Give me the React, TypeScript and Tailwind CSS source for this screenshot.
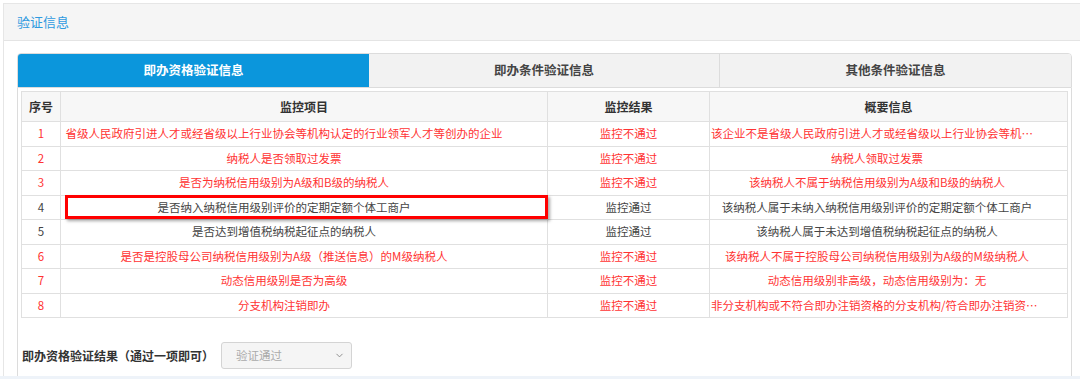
import React from "react";
import { ChevronDown } from "lucide-react";

type Row = { no: number; item: string; result: string; info: string; fail: boolean };

const rows: Row[] = [
  { no: 1, item: "省级人民政府引进人才或经省级以上行业协会等机构认定的行业领军人才等创办的企业", result: "监控不通过", info: "该企业不是省级人民政府引进人才或经省级以上行业协会等机构认定的行业领军人才等创办的企业", fail: true },
  { no: 2, item: "纳税人是否领取过发票", result: "监控不通过", info: "纳税人领取过发票", fail: true },
  { no: 3, item: "是否为纳税信用级别为A级和B级的纳税人", result: "监控不通过", info: "该纳税人不属于纳税信用级别为A级和B级的纳税人", fail: true },
  { no: 4, item: "是否纳入纳税信用级别评价的定期定额个体工商户", result: "监控通过", info: "该纳税人属于未纳入纳税信用级别评价的定期定额个体工商户", fail: false },
  { no: 5, item: "是否达到增值税纳税起征点的纳税人", result: "监控通过", info: "该纳税人属于未达到增值税纳税起征点的纳税人", fail: false },
  { no: 6, item: "是否是控股母公司纳税信用级别为A级（推送信息）的M级纳税人", result: "监控不通过", info: "该纳税人不属于控股母公司纳税信用级别为A级的M级纳税人", fail: true },
  { no: 7, item: "动态信用级别是否为高级", result: "监控不通过", info: "动态信用级别非高级，动态信用级别为：无", fail: true },
  { no: 8, item: "分支机构注销即办", result: "监控不通过", info: "非分支机构或不符合即办注销资格的分支机构/符合即办注销资格的分支机构存在未办结事项", fail: true },
];

export default function App() {
  return (
    <div
      className="w-[1080px] h-[379px] overflow-hidden bg-white flex flex-col"
      style={{ fontFamily: '"Noto Sans CJK SC", "Noto Sans", sans-serif' }}
    >
      <div className="ml-[3px] mt-[3px] flex-1 border-l border-t border-[#e6e6e6] flex flex-col min-h-0">
        <div className="h-[37px] bg-[#f5f5f5] border-b border-[#e4e4e4] flex items-center pl-[13px] text-[13px] text-[#2f9ae0]">
          验证信息
        </div>
        <div className="pl-[13px] pt-[12px] flex-1 min-h-0 flex flex-col">
          <div className="w-[1055px] flex-1 flex flex-col min-h-0">
            <div className="grid grid-cols-3 h-[35px] border border-[#dcdcdc] rounded-t-[4px] overflow-hidden text-[12.5px] font-bold">
              <div className="bg-[#0b96dc] text-white flex items-center justify-center">即办资格验证信息</div>
              <div className="bg-[#f2f2f2] text-[#444] flex items-center justify-center border-r border-[#dcdcdc]">即办条件验证信息</div>
              <div className="bg-[#f2f2f2] text-[#444] flex items-center justify-center">其他条件验证信息</div>
            </div>
            <div className="flex-1 border-x border-[#dcdcdc] pl-[3px] pr-[3px] pt-[3px]">
              <table className="w-[1046px] table-fixed border-collapse text-[11.5px]">
                <colgroup>
                  <col className="w-[39px]" />
                  <col className="w-[487px]" />
                  <col className="w-[162px]" />
                  <col className="w-[358px]" />
                </colgroup>
                <thead>
                  <tr className="h-[30px] bg-[#f7f7f7] text-[#333] text-[12px] font-bold">
                    <th className="border border-[#e0e0e0] font-bold">序号</th>
                    <th className="border border-[#e0e0e0] font-bold">监控项目</th>
                    <th className="border border-[#e0e0e0] font-bold">监控结果</th>
                    <th className="border border-[#e0e0e0] font-bold">概要信息</th>
                  </tr>
                </thead>
                <tbody>
                  {rows.map((r) => {
                    const c = r.fail ? "text-[#ff3333]" : "text-[#444]";
                    return (
                      <tr key={r.no} className={`h-[24.5px] ${c}`}>
                        <td className="border border-[#e0e0e0] text-center p-0">{r.no}</td>
                        <td className="border border-[#e0e0e0] text-center pl-0 pr-[40px] py-0 relative whitespace-nowrap">
                          {r.item}
                          {r.no === 4 && (
                            <div className="absolute left-[4px] right-[-1px] top-[-1px] bottom-[0px] border-[3px] border-[#ff0000] shadow-[2px_2px_3px_rgba(0,0,0,0.35)]" />
                          )}
                        </td>
                        <td className="border border-[#e0e0e0] text-center p-0">{r.result}</td>
                        <td className="border border-[#e0e0e0] text-center pl-[1px] pr-[24px] py-0 whitespace-nowrap overflow-hidden text-ellipsis">
                          {r.info}
                        </td>
                      </tr>
                    );
                  })}
                </tbody>
              </table>
              <div className="mt-[24px] flex items-center pl-[1px]">
                <span className="text-[12px] font-bold text-[#333] w-[199px]">即办资格验证结果（通过一项即可）</span>
                <div className="w-[131px] h-[27px] border border-[#d4d4d4] rounded-[3px] bg-[#f5f5f5] flex items-center justify-between pl-[14px] pr-[6px] text-[11.5px] text-[#aaa]">
                  <span>验证通过</span>
                  <ChevronDown size={11} strokeWidth={2} className="text-[#888]" />
                </div>
              </div>
            </div>
          </div>
        </div>
      </div>
      <div className="h-[3px] bg-[#eef3f9]" />
    </div>
  );
}
